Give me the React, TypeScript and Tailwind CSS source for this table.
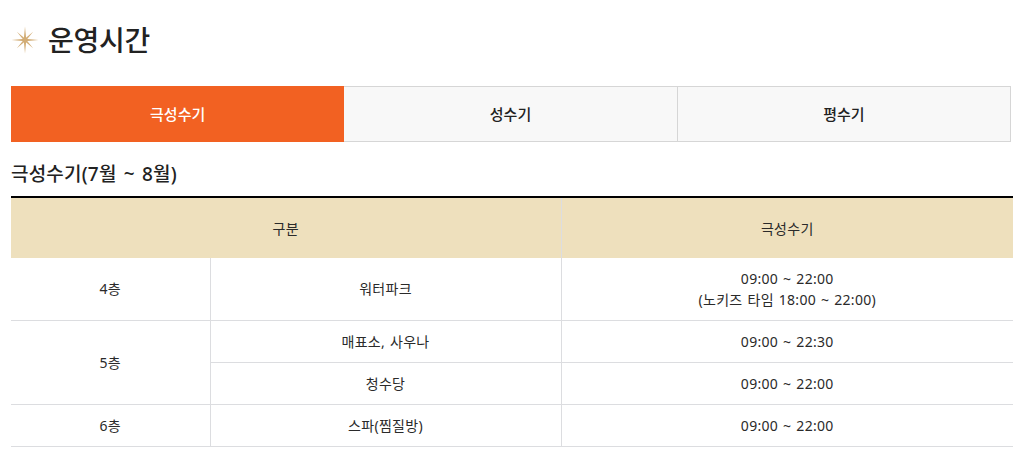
import React from "react";

const Star = () => (
  <svg width="28" height="28" viewBox="0 0 28 28" className="shrink-0">
    <g fill="#d2ad76" transform="translate(14 14)">
      {[0, 45, 90, 135, 180, 225, 270, 315].map((a) => (
        <polygon
          key={a}
          points={a % 90 === 0 ? "-1.3,0 0,-13.5 1.3,0" : "-1.2,0 0,-11.5 1.2,0"}
          transform={`rotate(${a})`}
        />
      ))}
      <circle r="2.2" />
    </g>
  </svg>
);

const font = { fontFamily: '"Noto Sans", "Noto Sans CJK KR", sans-serif' };

export default function App() {
  return (
    <div className="bg-white w-[1023px] h-[456px] overflow-hidden" style={font}>
      <div className="ml-[11px] w-[1002px] pt-[24px]">
        <div className="flex items-center gap-[9px] h-[32px]">
          <Star />
          <h2 className="text-[28px] font-medium text-[#222] leading-none tracking-[-0.3px]">운영시간</h2>
        </div>

        <div className="mt-[30px] grid grid-cols-3 w-[1000px] h-[56px] text-[15px] font-medium">
          <div className="bg-[#f26122] text-white flex items-center justify-center">극성수기</div>
          <div className="bg-[#f8f8f8] text-[#222] border border-[#d6d6d6] border-l-0 flex items-center justify-center">성수기</div>
          <div className="bg-[#f8f8f8] text-[#222] border border-[#d6d6d6] border-l-0 flex items-center justify-center">평수기</div>
        </div>

        <h3 className="mt-[19px] text-[19px] font-medium text-[#222] leading-[27px] tracking-[0.2px] [word-spacing:2px]">극성수기(7월 ~ 8월)</h3>

        <table className="mt-[8px] w-[1002px] border-collapse border-t-2 border-t-black text-[14px] text-[#2a2a2a] text-center table-fixed tracking-[0.3px] [word-spacing:1px]">
          <colgroup>
            <col className="w-[199px]" />
            <col className="w-[351px]" />
            <col />
          </colgroup>
          <thead>
            <tr className="h-[61px] bg-[#eee0bd]">
              <th colSpan={2} className="font-normal border-r border-[#dcdde0]">구분</th>
              <th className="font-normal">극성수기</th>
            </tr>
          </thead>
          <tbody>
            <tr className="h-[62px] border-b border-[#dcdde0]">
              <td className="border-r border-[#dcdde0]">4층</td>
              <td className="border-r border-[#dcdde0]">워터파크</td>
              <td className="leading-[21px]">
                09:00 ~ 22:00
                <br />
                (노키즈 타임 18:00 ~ 22:00)
              </td>
            </tr>
            <tr className="h-[42px] border-b border-[#dcdde0]">
              <td rowSpan={2} className="border-r border-[#dcdde0]">5층</td>
              <td className="border-r border-[#dcdde0]">매표소, 사우나</td>
              <td>09:00 ~ 22:30</td>
            </tr>
            <tr className="h-[42px] border-b border-[#dcdde0]">
              <td className="border-r border-[#dcdde0]">청수당</td>
              <td>09:00 ~ 22:00</td>
            </tr>
            <tr className="h-[42px] border-b border-[#dcdde0]">
              <td className="border-r border-[#dcdde0]">6층</td>
              <td className="border-r border-[#dcdde0]">스파(찜질방)</td>
              <td>09:00 ~ 22:00</td>
            </tr>
          </tbody>
        </table>
      </div>
    </div>
  );
}
